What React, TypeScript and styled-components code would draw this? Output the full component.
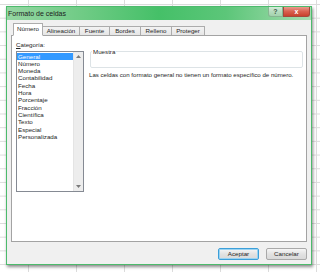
import * as React from 'react'
import styled, { createGlobalStyle } from 'styled-components'

const GlobalStyle = createGlobalStyle`
  html, body {
    margin: 0;
    padding: 0;
  }
  body {
    font-family: 'Liberation Sans', Arial, sans-serif;
    color: #262626;
  }
`

const Desktop = styled.div`
  width: 320px;
  height: 272px;
  box-sizing: border-box;
  padding: 6px 0 0 6px;
  overflow: hidden;
  background-color: #fff;
  background-image: linear-gradient(to right, #dcdcdc 1px, transparent 1px),
    linear-gradient(to bottom, #dcdcdc 1px, transparent 1px);
  background-size: 48px 100%, 100% 13.7px;
  background-position: 28px 0, 0 4px;
`

const Dialog = styled.div`
  width: 306px;
  height: 259px;
  box-sizing: border-box;
  border: 1px solid #4cbb6c;
  background: #f0f0f0;
  box-shadow: 1px 2px 3px rgba(0, 0, 0, 0.45);
  display: flex;
  flex-direction: column;
`

const TitleBar = styled.div`
  height: 13px;
  flex: none;
  display: flex;
  align-items: flex-start;
  justify-content: space-between;
  background: linear-gradient(
    to right,
    #95d6a2 0%,
    #6fcb85 25%,
    #45c068 50%,
    #5cc679 72%,
    #a6dcb0 100%
  );
`

const Title = styled.span`
  font-size: 7px;
  line-height: 13px;
  padding-left: 1px;
  color: #1d1d1d;
`

const Controls = styled.div`
  display: flex;
  margin-right: 1px;
`

const ControlButton = styled.div<{ $close?: boolean }>`
  width: ${(p) => (p.$close ? 27 : 15)}px;
  height: 10px;
  box-sizing: border-box;
  display: flex;
  align-items: center;
  justify-content: center;
  font-size: 7px;
  font-weight: bold;
  border: 1px solid ${(p) => (p.$close ? '#a5483c' : '#86b691')};
  border-top: none;
  border-radius: ${(p) => (p.$close ? '0 0 3px 0' : '0 0 0 3px')};
  color: ${(p) => (p.$close ? '#fff' : '#3d5a45')};
  background: ${(p) =>
    p.$close
      ? 'linear-gradient(to bottom, #eb9a8d, #d9614f 50%, #c9412d)'
      : 'linear-gradient(to bottom, #d7ecdb, #b6dcbf 50%, #a3d2ae)'};
`

const Body = styled.div`
  flex: 1;
  display: flex;
  flex-direction: column;
  padding: 3px 4px 0 4px;
`

const TabStrip = styled.div`
  height: 13px;
  margin-bottom: -1px;
  padding-left: 2px;
  display: flex;
  align-items: flex-end;
  position: relative;
  z-index: 1;
`

const Tab = styled.div<{ $active?: boolean; $width: number }>`
  width: ${(p) => p.$width}px;
  height: ${(p) => (p.$active ? 13 : 9)}px;
  margin-bottom: ${(p) => (p.$active ? 0 : 1)}px;
  margin-left: -1px;
  box-sizing: border-box;
  border: 1px solid #acacac;
  border-bottom: ${(p) => (p.$active ? '1px solid #fff' : 'none')};
  background: ${(p) =>
    p.$active ? '#fff' : 'linear-gradient(to bottom, #f3f3f3, #e6e6e6)'};
  position: relative;
  z-index: ${(p) => (p.$active ? 2 : 1)};
  font-size: 6.2px;
  line-height: ${(p) => (p.$active ? 10 : 8)}px;
  text-align: center;
  white-space: nowrap;

  &:first-child {
    margin-left: 0;
  }
`

const Panel = styled.div`
  height: 207px;
  flex: none;
  box-sizing: border-box;
  border: 1px solid #a3a3a3;
  background: #fff;
  display: flex;
  gap: 5px;
  padding: 5px 3px 0 4px;
`

const LeftColumn = styled.div`
  display: flex;
  flex-direction: column;
  gap: 2px;
`

const Label = styled.div`
  font-size: 6.2px;
  line-height: 8px;

  u {
    text-decoration: underline;
  }
`

const ListBox = styled.div`
  width: 68px;
  height: 141px;
  box-sizing: border-box;
  border: 1px solid #858a93;
  display: flex;
`

const Items = styled.div`
  flex: 1;
  padding-top: 0.5px;
`

const Item = styled.div<{ $selected?: boolean }>`
  height: 7.33px;
  line-height: 7.33px;
  font-size: 6.2px;
  padding-left: 1px;
  white-space: nowrap;
  background: ${(p) => (p.$selected ? '#3399ff' : 'transparent')};
  color: ${(p) => (p.$selected ? '#fff' : '#262626')};
`

const ScrollBar = styled.div`
  width: 9px;
  background: #ededed;
  border-left: 1px solid #e4e4e4;
  display: flex;
  flex-direction: column;
  justify-content: space-between;
  align-items: center;
  padding: 3px 0;
`

const RightColumn = styled.div`
  flex: 1;
  display: flex;
  flex-direction: column;
  padding-top: 7px;
`

const GroupBox = styled.fieldset`
  margin: 0 0 0 1px;
  padding: 0;
  min-width: 0;
  height: 20px;
  box-sizing: border-box;
  border: 1px solid #dde3e6;
  border-radius: 2px;
`

const Legend = styled.legend`
  font-size: 6.2px;
  line-height: 7px;
  padding: 0 1px;
  margin-left: 1px;
`

const Description = styled.div`
  margin-top: 3px;
  font-size: 6.1px;
  line-height: 8px;
  white-space: nowrap;
`

const Footer = styled.div`
  height: 22px;
  flex: none;
  display: flex;
  justify-content: flex-end;
  align-items: flex-start;
  gap: 7px;
  padding-top: 6px;
  box-sizing: border-box;
`

const Button = styled.div<{ $default?: boolean }>`
  width: 41px;
  height: 12px;
  box-sizing: border-box;
  border: 1px solid ${(p) => (p.$default ? '#3c9fd9' : '#a9a9a9')};
  border-radius: 2px;
  background: linear-gradient(to bottom, #f6f6f6, #e2e2e2 50%, #d9d9d9);
  box-shadow: ${(p) => (p.$default ? 'inset 0 0 0 1px #9ad3f2' : 'none')};
  font-size: 6.2px;
  line-height: 10px;
  text-align: center;
`

const Arrow = ({ down }: { down?: boolean }): JSX.Element => (
  <svg width="5" height="3" viewBox="0 0 5 3">
    <path d={down ? 'M0 0 L5 0 L2.5 3 Z' : 'M0 3 L5 3 L2.5 0 Z'} fill="#7a7a7a" />
  </svg>
)

const tabs = [
  { label: 'Número', width: 30 },
  { label: 'Alineación', width: 38 },
  { label: 'Fuente', width: 31 },
  { label: 'Bordes', width: 32 },
  { label: 'Relleno', width: 32 },
  { label: 'Proteger', width: 34 },
]

const categories = [
  'General',
  'Número',
  'Moneda',
  'Contabilidad',
  'Fecha',
  'Hora',
  'Porcentaje',
  'Fracción',
  'Científica',
  'Texto',
  'Especial',
  'Personalizada',
]

export default function App(): JSX.Element {
  return (
    <Desktop>
      <GlobalStyle />
      <Dialog>
        <TitleBar>
          <Title>Formato de celdas</Title>
          <Controls>
            <ControlButton>?</ControlButton>
            <ControlButton $close>x</ControlButton>
          </Controls>
        </TitleBar>
        <Body>
          <TabStrip>
            {tabs.map((t, i) => (
              <Tab key={t.label} $width={t.width} $active={i === 0}>
                {t.label}
              </Tab>
            ))}
          </TabStrip>
          <Panel>
            <LeftColumn>
              <Label>
                <u>C</u>ategoría:
              </Label>
              <ListBox>
                <Items>
                  {categories.map((c, i) => (
                    <Item key={c} $selected={i === 0}>
                      {c}
                    </Item>
                  ))}
                </Items>
                <ScrollBar>
                  <Arrow />
                  <Arrow down />
                </ScrollBar>
              </ListBox>
            </LeftColumn>
            <RightColumn>
              <GroupBox>
                <Legend>Muestra</Legend>
              </GroupBox>
              <Description>
                Las celdas con formato general no tienen un formato específico de número.
              </Description>
            </RightColumn>
          </Panel>
          <Footer>
            <Button $default>Aceptar</Button>
            <Button>Cancelar</Button>
          </Footer>
        </Body>
      </Dialog>
    </Desktop>
  )
}
